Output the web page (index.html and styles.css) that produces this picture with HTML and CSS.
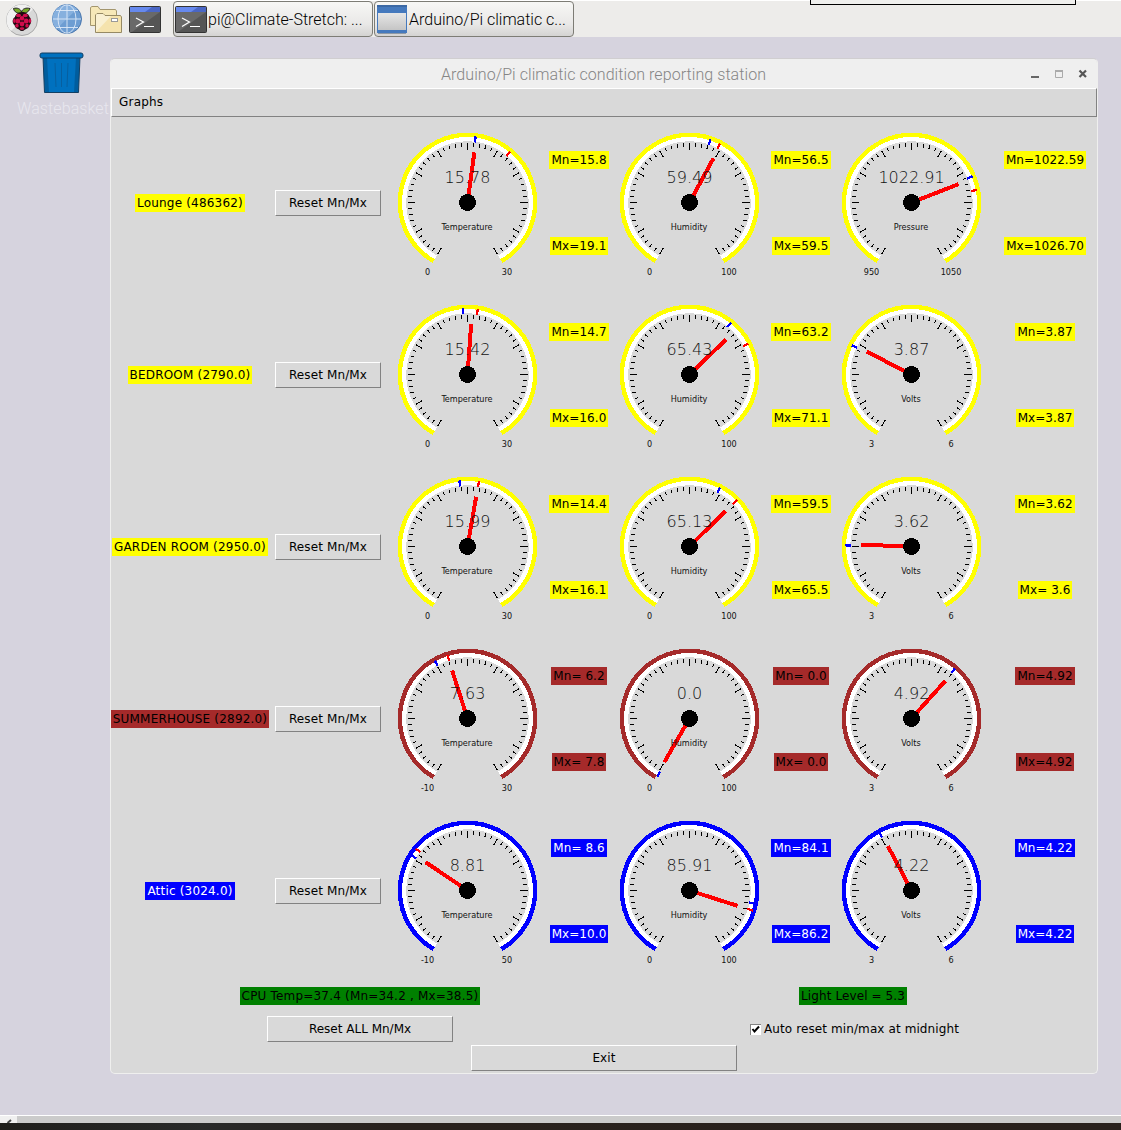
FILE: index.html
```html
<!DOCTYPE html>
<html lang="en">
<head>
<meta charset="utf-8">
<title>Arduino/Pi climatic condition reporting station</title>
<link rel="stylesheet" href="styles.css">
</head>
<body>
<svg class="defs" width="0" height="0">
  <defs>
    <symbol id="terminal" viewBox="0 0 32 28">
      <rect x=".5" y=".5" width="31" height="26" rx="1" fill="#555" stroke="#333"/>
      <path d="M1 6H31L3 26H1Z" fill="#696969"/>
      <rect x="1" y="1" width="30" height="5" fill="#4a66c4"/>
      <path d="M1 1H23L16 6H1Z" fill="#6689ee"/>
      <path d="M7 12L14.5 16L7 20.500M15 20.500H25" fill="none" stroke="#fff" stroke-width="1.200"/>
    </symbol>
    <g id="ticks" stroke="#000"></g>
  </defs>
</svg>
<div class="screen">
  <header class="taskbar">
    <svg class="icon menu" width="34" height="34" viewBox="0 0 34 34">
      <circle cx="17" cy="17" r="15.500" fill="#d8d8d8" stroke="#a9a9a9"/>
      <path d="M6 28A15 15 0 0 1 28 6Z" fill="#f1f1f1"/>
      <path d="M16.500 10C13 11 9 9 8.500 5.500C12 4.500 15.500 5.500 16.500 9C17.500 5.500 21 4.500 25 5.500C24 9 20 11 16.500 10Z" fill="#75a928" stroke="#222"/>
      <path d="M17 9C13 9 10 12 10 14C7 16 7 20 9.500 22C10 25 13 26 14 26.500C16 28.500 18 28.500 20 26.500C22 26 24.500 24 24.500 22C27 20 26.500 16 24.500 14C24 11 20 9 17 9Z" fill="#1e0a10"/>
      <g fill="#d00d4c">
        <ellipse cx="13.500" cy="12.500" rx="2.600" ry="1.800"/><ellipse cx="20.300" cy="12.500" rx="2.600" ry="1.800"/>
        <circle cx="17" cy="15.300" r="2.300"/><circle cx="12.800" cy="18" r="2.500"/><circle cx="21.200" cy="18" r="2.500"/>
        <ellipse cx="9.300" cy="17.800" rx="1.200" ry="2.200"/><ellipse cx="25" cy="17.800" rx="1.200" ry="2.200"/>
        <circle cx="17" cy="21" r="2.400"/><ellipse cx="12" cy="22.700" rx="1.700" ry="1.900"/><ellipse cx="22" cy="22.700" rx="1.700" ry="1.900"/>
        <ellipse cx="17" cy="25.600" rx="2.300" ry="1.400"/>
      </g>
    </svg>
    <svg class="icon globe" width="32" height="32" viewBox="0 0 32 32">
      <circle cx="16" cy="16" r="14.500" fill="#6d9dd2" stroke="#4b77ad"/>
      <path d="M5.500 26A14 14 0 0 1 26 6Z" fill="#86b0de"/>
      <g fill="none" stroke="#dce9f7" stroke-width=".9"><ellipse cx="16" cy="16" rx="9" ry="14.300"/><path d="M16 2V30M2 16H30M5 7.500H27M5 24.500H27"/></g>
    </svg>
    <svg class="icon folder" width="34" height="30" viewBox="0 0 34 30">
      <path d="M1.500 20.500V2.500L3 1.500H9L11 4.500H26.500L27.500 6V20.500Z" fill="#f6e8b8" stroke="#a3966e"/>
      <path d="M6.500 27.500V10L8 8.500H14L16 10.500H31.500L32.500 12V27.500Z" fill="#f5e3ad" stroke="#968a65"/>
      <path d="M7 27L22 11H16L14 9H8L7 10Z" fill="#f9f0d2"/>
      <rect x="22.500" y="13.500" width="6" height="3" fill="#fff" stroke="#999"/>
    </svg>
    <svg class="icon term" width="32" height="28"><use href="#terminal"/></svg>
    <div class="task first"><svg width="32" height="28"><use href="#terminal"/></svg><span>pi@Climate-Stretch: ...</span></div>
    <div class="task second">
      <svg width="30" height="29" viewBox="0 0 30 29"><defs><linearGradient id="pane" x2="0" y2="1"><stop stop-color="#e6e6e6"/><stop offset="1" stop-color="#c5c5c5"/></linearGradient></defs><rect width="30" height="28" fill="#4579bd"/><rect x="1" y="8" width="28" height="17" fill="url(#pane)"/><path d="M0 1H30" stroke="#3b68a4" stroke-width="2"/><path d="M1 28.500H29" stroke="#8d98a5"/></svg>
      <span>Arduino/Pi climatic c...</span>
    </div>
    <div class="tab-outline"></div>
  </header>

  <div class="desktop">
    <div class="trash">
      <svg width="46" height="42" viewBox="0 0 46 42"><path d="M4 5H41L39.500 40.500H5.500Z" fill="#005d9e" stroke="#123f63"/><path d="M8 6H37L35 40H10Z" fill="#0071bf"/><path d="M16 11L17 35M22.500 11V35M29 11L28 35" stroke="#075f9f"/><rect x="1" y="1" width="43" height="5" rx="2" fill="#0071bf" stroke="#123f63"/></svg>
      <span>Wastebasket</span>
    </div>
    <main class="window">
      <div class="titlebar">
        <span>Arduino/Pi climatic condition reporting station</span>
        <svg width="58" height="12" viewBox="0 0 58 12"><path d="M1 9H9" stroke="#666" stroke-width="2"/><path d="M25.500 3V9.500H32.500V3" fill="none" stroke="#aaa"/><path d="M25 3H33" stroke="#aaa" stroke-width="2"/><path d="M49.500 2.500L56 9M56 2.500L49.500 9" stroke="#555" stroke-width="2.200"/></svg>
      </div>
      <nav class="menubar">Graphs</nav>
      <div id="stations"></div>
      <div class="summary">
        <div class="left"><span class="tag green">CPU Temp=37.4 (Mn=34.2 , Mx=38.5)</span><button class="reset-all">Reset ALL Mn/Mx</button></div>
        <div class="right"><span class="tag green light">Light Level = 5.3</span>
          <div class="check"><svg width="11" height="11" viewBox="0 0 11 11"><rect width="11" height="11" fill="#fff"/><path d="M0 .5H11M.5 0V11" stroke="#828282"/><path d="M2.500 5L4.500 7.500L9 2.500" fill="none" stroke="#000" stroke-width="2"/></svg><span>Auto reset min/max at midnight</span></div></div>
      </div>
      <button class="exit">Exit</button>
    </main>
  </div>
  <footer class="scroll"><span class="arrow"><svg width="17" height="7" viewBox="0 0 17 7"><path d="M11 4L7.500 7" stroke="#444" stroke-width="2"/></svg></span></footer>
  <div class="edge"></div>
</div>
<script src="script.js"></script>
</body>
</html>
```
FILE: styles.css
```css
* { box-sizing: border-box; }
body { margin: 0; width: 1121px; height: 1130px; overflow: hidden; background: #d6d3de; font: 12px "DejaVu Sans", sans-serif; color: #000; }
.defs { position: absolute; }
.screen { display: flex; flex-direction: column; height: 1130px; }
svg { display: block; flex: none; }

.taskbar { position: relative; display: flex; align-items: flex-start; height: 37px; border-top: 1px solid #fff; background: #edecea; }
.menu { margin: 2px 0 0 5px; }
.globe { margin: 2px 0 0 12px; }
.folder { margin: 4px 0 0 6px; }
.term { margin: 5px 0 0 6px; }
.task { display: flex; height: 36px; width: 200px; border: 1px solid #7d7c75; border-radius: 4px; background: linear-gradient(#f7f7f5, #e9e8e7 65%, #d4d3d2); font: 300 16px/35px Roboto, sans-serif; white-space: nowrap; }
.first { margin-left: 12px; padding-left: 1px; }
.first svg { margin-top: 4px; }
.first span { margin-left: 1px; }
.second { margin-left: 1px; padding-left: 2px; }
.second svg { margin-top: 3px; }
.second span { margin-left: 2px; }
.tab-outline { position: absolute; left: 810px; top: -1px; width: 266px; height: 5px; border: 1px solid #000; border-top: 0; background: #f0f0ee; }

.desktop { display: flex; height: 1078px; }
.trash { width: 110px; padding: 15px 0 0 17px; color: #e8e7ee; font: 300 16px/20px Roboto, sans-serif; letter-spacing: .1px; }
.trash svg { margin: 0 0 5px 22px; }
.window { width: 988px; height: 1016px; margin-top: 21px; border: 1px solid #efefee; border-top-color: #d0ced0; border-radius: 5px; background: #d9d9d9; }
.titlebar { position: relative; display: flex; justify-content: center; height: 29px; padding-right: 1px; border-radius: 4px 4px 0 0; background: #efefef; color: #858585; font: 300 16px/31px Roboto, sans-serif; letter-spacing: .07px; }
.titlebar svg { position: absolute; right: 9px; top: 9px; }
.menubar { height: 29px; padding-left: 7px; border: 1px solid #828282; border-top-color: #fff; border-left-color: #fff; line-height: 26px; letter-spacing: .2px; }

.station { display: grid; grid-template-columns: 158px 118px 161px 62px 159px 64px 157px 107px; height: 172px; align-items: center; justify-items: center; }
.tag { display: block; height: 18px; padding: 0 2px; line-height: 19px; letter-spacing: .19px; white-space: nowrap; }
.yellow { background: #ff0; }
.brown { background: #a52a2a; }
.blue { background: #00f; color: #fff; }
.green { background: #008000; }
.limits { display: flex; flex-direction: column; align-items: center; gap: 68px; }
.limits .tag { letter-spacing: .06px; }
.limits:last-child { margin-left: 3px; }
button { display: block; padding: 0 0 1px; border: 1px solid #828282; border-top-color: #fff; border-left-color: #fff; background: #d9d9d9; color: #000; height: 26px; font: 12px "DejaVu Sans", sans-serif; letter-spacing: .12px; }
.station button { width: 106px; }
.reset-all { letter-spacing: 0; }
.gauge { shape-rendering: crispEdges; }
.gauge .value { font: 200 16px "DejaVu Sans Light", "DejaVu Sans", sans-serif; }
.gauge .small { font: 9px "DejaVu Sans Condensed", "DejaVu Sans", sans-serif; }
.gauge text { text-anchor: middle; fill: #111; }

.summary { display: flex; height: 68px; padding: 10px 0 0 128px; }
.left { display: flex; flex-direction: column; align-items: center; gap: 11px; width: 242px; }
.right { display: flex; flex-direction: column; align-items: center; gap: 15px; width: 212px; margin-left: 266px; }
.light { letter-spacing: .1px; }
.reset-all { width: 186px; }
.check { display: flex; align-items: center; gap: 3px; height: 18px; margin-left: 3px; white-space: nowrap; letter-spacing: .1px; }
.exit { width: 266px; margin-left: 360px; }

.scroll { height: 8px; border-top: 1px solid #fff; background: #cbcbcb; }
.arrow { display: block; width: 17px; height: 7px; background: #f0f0f0; }
.edge { height: 7px; background: linear-gradient(90deg, #1f1e1b, #292a29 18%, #29221d 35%, #29211c); }
```
FILE: script.js
```js
const point = (deg, r) => {
  const a = deg * Math.PI / 180;
  return [(r * Math.sin(a)).toFixed(2), (-r * Math.cos(a)).toFixed(2)];
};
const line = (deg, from, to, attrs) => {
  const [x1, y1] = point(deg, from), [x2, y2] = point(deg, to);
  return `<line x1="${x1}" y1="${y1}" x2="${x2}" y2="${y2}" ${attrs || ''}/>`;
};
const arc = (r, color, width) => {
  const [x1, y1] = point(-150, r), [x2, y2] = point(150, r);
  return `<path d="M${x1} ${y1}A${r} ${r} 0 1 1 ${x2} ${y2}" fill="none" stroke="${color}" stroke-width="${width}"/>`;
};

// Scale marks: one long mark every 30 degrees, four short ones between.
let marks = '';
for (let deg = -150; deg <= 150; deg += 6) {
  marks += line(deg, deg % 30 ? 56 : 52.5, 60);
}
document.getElementById('ticks').innerHTML = marks;

// Each gauge: name, scale low, scale high, reading, min, max, min label, max label.
const stations = [
  ['Lounge (486362)', 'yellow', '#ff0', [
    ['Temperature', 0, 30, '15.78', 15.8, 19.1, 'Mn=15.8', 'Mx=19.1'],
    ['Humidity', 0, 100, '59.49', 56.5, 59.5, 'Mn=56.5', 'Mx=59.5'],
    ['Pressure', 950, 1050, '1022.91', 1022.59, 1026.7, 'Mn=1022.59', 'Mx=1026.70']]],
  ['BEDROOM (2790.0)', 'yellow', '#ff0', [
    ['Temperature', 0, 30, '15.42', 14.7, 16, 'Mn=14.7', 'Mx=16.0'],
    ['Humidity', 0, 100, '65.43', 63.2, 71.1, 'Mn=63.2', 'Mx=71.1'],
    ['Volts', 3, 6, '3.87', 3.87, 3.87, 'Mn=3.87', 'Mx=3.87']]],
  ['GARDEN ROOM (2950.0)', 'yellow', '#ff0', [
    ['Temperature', 0, 30, '15.99', 14.4, 16.1, 'Mn=14.4', 'Mx=16.1'],
    ['Humidity', 0, 100, '65.13', 59.5, 65.5, 'Mn=59.5', 'Mx=65.5'],
    ['Volts', 3, 6, '3.62', 3.62, 3.62, 'Mn=3.62', 'Mx= 3.6']]],
  ['SUMMERHOUSE (2892.0)', 'brown', '#a52a2a', [
    ['Temperature', -10, 30, '7.63', 6.2, 7.8, 'Mn= 6.2', 'Mx= 7.8'],
    ['Humidity', 0, 100, '0.0', 0, 0, 'Mn= 0.0', 'Mx= 0.0'],
    ['Volts', 3, 6, '4.92', 4.92, 4.92, 'Mn=4.92', 'Mx=4.92']]],
  ['Attic (3024.0)', 'blue', '#00f', [
    ['Temperature', -10, 50, '8.81', 8.6, 10, 'Mn= 8.6', 'Mx=10.0'],
    ['Humidity', 0, 100, '85.91', 84.1, 86.2, 'Mn=84.1', 'Mx=86.2'],
    ['Volts', 3, 6, '4.22', 4.22, 4.22, 'Mn=4.22', 'Mx=4.22']]]
];

const gauge = ([name, lo, hi, value, min, max], color) => {
  const angle = v => (v - lo) / (hi - lo) * 300 - 150;
  return `<svg class="gauge" width="151" height="172" viewBox="-75.5 -85.5 151 172">
    ${arc(63.5, '#fff', 4.5)}${arc(67.7, color, 4.4)}
    <use href="#ticks"/>
    ${line(angle(max) - 1, 60.5, 66.5, 'stroke="#f00" stroke-width="2.3"')}
    ${line(angle(min) - 1, 60.5, 66.5, 'stroke="#00f" stroke-width="2.3"')}
    ${line(angle(+value), 0, 50.5, 'stroke="#f00" stroke-width="4"')}
    <circle r="8.5"/>
    <text class="value" x="0" y="-20">${value}</text>
    <text class="small" x="-.5" y="27">${name}</text>
    <text class="small" x="-40" y="72">${lo}</text>
    <text class="small" x="39.500" y="72">${hi}</text>
  </svg>`;
};

document.getElementById('stations').innerHTML = stations.map(([name, tone, color, gauges]) =>
  `<section class="station"><span class="tag ${tone}">${name}</span><button>Reset Mn/Mx</button>${
    gauges.map(g => gauge(g, color) +
      `<div class="limits"><span class="tag ${tone}">${g[6]}</span><span class="tag ${tone}">${g[7]}</span></div>`).join('')
  }</section>`).join('');
```
